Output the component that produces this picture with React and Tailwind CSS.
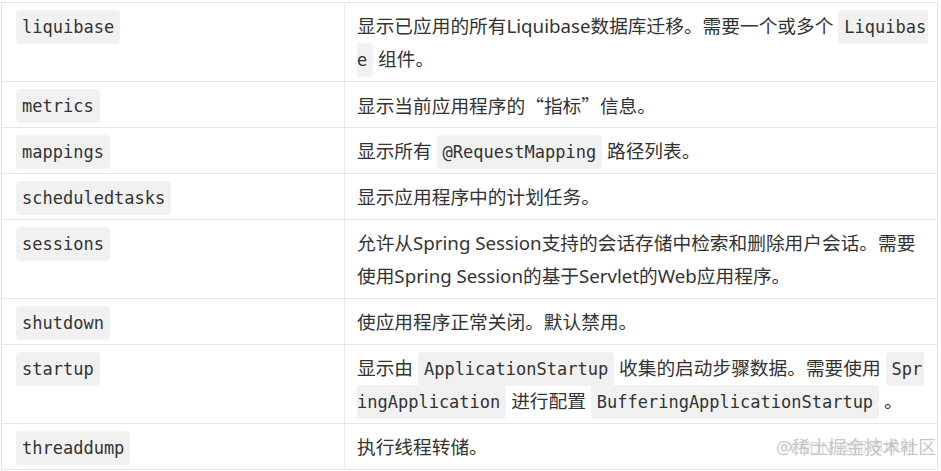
import React from "react";

const mono = { fontFamily: '"DejaVu Sans Mono", "Liberation Mono", monospace' };

function Code({ children, side = "both" }) {
  const cls =
    side === "both"
      ? "px-[6px] rounded-[4px]"
      : side === "start"
      ? "pl-[6px] pr-[2px] rounded-l-[4px]"
      : "pl-0 pr-[6px] rounded-r-[4px]";
  return (
    <span
      className={`bg-[#f1f1f1] text-[#333] text-[17px] leading-[18px] py-[7px] ${cls}`}
      style={mono}
    >
      {children}
    </span>
  );
}

function Row({ name, children }) {
  return (
    <div className="flex border-b border-[#e6e6e6]">
      <div className="w-[343px] shrink-0 border-r border-[#ececec] pl-[14px] pr-[12px] py-[6px] h-auto">
        <div className="h-[33px] leading-[33px]">
          <Code>{name}</Code>
        </div>
      </div>
      <div className="flex-1 pl-[12px] pr-[10px] py-[6px] whitespace-nowrap">
        {children}
      </div>
    </div>
  );
}

function Line({ children }) {
  return <div className="h-[33px] leading-[33px]">{children}</div>;
}

const cjk = { fontFamily: '"Noto Sans CJK SC", sans-serif' };

export default function App() {
  return (
    <div
      className="relative w-[941px] h-[471px] bg-white overflow-hidden pt-[2px] pl-[1px] text-[#333] text-[18.7px]"
      style={{ fontFamily: '"Noto Sans", "Noto Sans CJK SC", sans-serif' }}
    >
      <div className="w-[937px] border-t border-l border-r border-[#e3e3e3]">
        <Row name="liquibase">
          <Line>
            显示已应用的所有Liquibase数据库迁移。需要一个或多个{" "}
            <Code side="start">Liquibas</Code>
          </Line>
          <Line>
            <Code side="end">e</Code> 组件。
          </Line>
        </Row>
        <Row name="metrics">
          <Line>
            显示当前应用程序的<span style={cjk}>“</span>指标<span style={cjk}>”</span>信息。
          </Line>
        </Row>
        <Row name="mappings">
          <Line>
            显示所有 <Code>@RequestMapping</Code> 路径列表。
          </Line>
        </Row>
        <Row name="scheduledtasks">
          <Line>显示应用程序中的计划任务。</Line>
        </Row>
        <Row name="sessions">
          <Line>允许从Spring Session支持的会话存储中检索和删除用户会话。需要</Line>
          <Line>使用Spring Session的基于Servlet的Web应用程序。</Line>
        </Row>
        <Row name="shutdown">
          <Line>使应用程序正常关闭。默认禁用。</Line>
        </Row>
        <Row name="startup">
          <Line>
            显示由 <Code>ApplicationStartup</Code> 收集的启动步骤数据。需要使用{" "}
            <Code side="start">Spr</Code>
          </Line>
          <Line>
            <Code side="end">ingApplication</Code> 进行配置{" "}
            <Code>BufferingApplicationStartup</Code> 。
          </Line>
        </Row>
        <Row name="threaddump">
          <Line>执行线程转储。</Line>
        </Row>
      </div>
      <div className="absolute left-[776px] top-[434px] text-[18px] leading-[26px] text-[#c8c8c8] whitespace-nowrap">
        @稀土掘金技术社区
      </div>
      <div className="absolute left-[790px] top-[435px] text-[16px] leading-[26px] text-[#c0c0c0]/60 whitespace-nowrap">
        CSDN @师坤坤坤
      </div>
    </div>
  );
}
